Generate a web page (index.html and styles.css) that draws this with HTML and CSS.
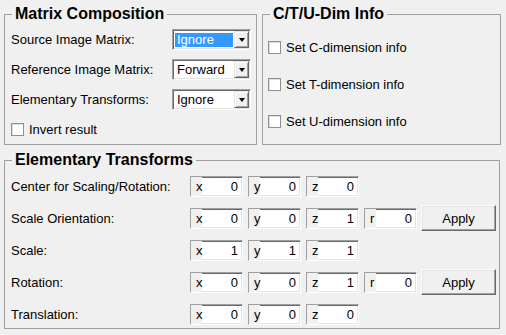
FILE: index.html
```html
<!DOCTYPE html>
<html>
<head>
<meta charset="utf-8">
<link rel="stylesheet" href="styles.css">
</head>
<body>
<div class="top">
  <fieldset class="group g1">
    <legend>Matrix Composition</legend>
    <div class="mc-grid">
      <span class="lbl">Source Image Matrix:</span>
      <div class="combo"><span class="cval sel">Ignore</span><span class="cbtn"><i></i></span></div>
      <span class="lbl">Reference Image Matrix:</span>
      <div class="combo"><span class="cval">Forward</span><span class="cbtn"><i></i></span></div>
      <span class="lbl">Elementary Transforms:</span>
      <div class="combo"><span class="cval">Ignore</span><span class="cbtn"><i></i></span></div>
      <label class="check span2"><span class="box"></span>Invert result</label>
    </div>
  </fieldset>
  <fieldset class="group g2">
    <legend>C/T/U-Dim Info</legend>
    <div class="dim-list">
      <label class="check"><span class="box"></span>Set C-dimension info</label>
      <label class="check"><span class="box"></span>Set T-dimension info</label>
      <label class="check"><span class="box"></span>Set U-dimension info</label>
    </div>
  </fieldset>
</div>
<fieldset class="group g3">
  <legend>Elementary Transforms</legend>
  <div class="et-grid">
    <span class="lbl">Center for Scaling/Rotation:</span>
    <div class="fields">
      <div class="field"><span class="fl">x</span><span class="fv">0</span></div>
      <div class="field"><span class="fl">y</span><span class="fv">0</span></div>
      <div class="field"><span class="fl">z</span><span class="fv">0</span></div>
    </div>
    <span class="lbl">Scale Orientation:</span>
    <div class="fields">
      <div class="field"><span class="fl">x</span><span class="fv">0</span></div>
      <div class="field"><span class="fl">y</span><span class="fv">0</span></div>
      <div class="field"><span class="fl">z</span><span class="fv">1</span></div>
      <div class="field"><span class="fl">r</span><span class="fv">0</span></div>
      <button class="btn">Apply</button>
    </div>
    <span class="lbl">Scale:</span>
    <div class="fields">
      <div class="field"><span class="fl">x</span><span class="fv">1</span></div>
      <div class="field"><span class="fl">y</span><span class="fv">1</span></div>
      <div class="field"><span class="fl">z</span><span class="fv">1</span></div>
    </div>
    <span class="lbl">Rotation:</span>
    <div class="fields">
      <div class="field"><span class="fl">x</span><span class="fv">0</span></div>
      <div class="field"><span class="fl">y</span><span class="fv">0</span></div>
      <div class="field"><span class="fl">z</span><span class="fv">1</span></div>
      <div class="field"><span class="fl">r</span><span class="fv">0</span></div>
      <button class="btn">Apply</button>
    </div>
    <span class="lbl">Translation:</span>
    <div class="fields">
      <div class="field"><span class="fl">x</span><span class="fv">0</span></div>
      <div class="field"><span class="fl">y</span><span class="fv">0</span></div>
      <div class="field"><span class="fl">z</span><span class="fv">0</span></div>
    </div>
  </div>
</fieldset>
</body>
</html>
```
FILE: styles.css
```css
html, body {
  margin: 0;
  padding: 0;
  background: #f0f0f0;
}
body {
  width: 506px;
  height: 335px;
  overflow: hidden;
  font-family: "Liberation Sans", Arial, sans-serif;
  font-size: 13px;
  color: #000;
}
.top {
  display: flex;
  align-items: stretch;
  margin: 5px 0 0 4px;
  gap: 5px;
}
.group {
  margin: 0;
  padding: 0;
  border: 1px solid #a0a0a0;
  min-width: 0;
  box-sizing: border-box;
}
.group legend {
  font-weight: bold;
  font-size: 16px;
  line-height: 18px;
  padding: 0 3px;
  margin-left: 7px;
}
.g1 { width: 253px; }
.g2 { width: 239px; }
.g3 {
  width: 496px;
  margin: 6px 0 0 4px;
}
.mc-grid {
  display: grid;
  grid-template-columns: 161px 79px;
  grid-auto-rows: 21px;
  row-gap: 9px;
  padding: 6px 0 4px 6px;
  align-items: center;
}
.span2 { grid-column: 1 / span 2; }
.lbl { white-space: nowrap; }
.combo {
  height: 21px;
  box-sizing: border-box;
  border: 1px solid;
  border-color: #a0a0a0 #fff #fff #a0a0a0;
  box-shadow: inset 1px 1px 0 #696969, inset -1px -1px 0 #e3e3e3;
  background: #fff;
  display: flex;
  align-items: center;
  padding: 1px 1px 1px 2px;
}
.cval {
  flex: 1;
  height: 14px;
  line-height: 14px;
  padding-left: 2px;
  margin-right: 1px;
}
.cval.sel {
  background: #3399ff;
  color: #fff;
}
.cbtn {
  width: 15px;
  height: 17px;
  box-sizing: border-box;
  background: #f0f0f0;
  border: 1px solid;
  border-color: #e3e3e3 #696969 #696969 #e3e3e3;
  box-shadow: inset 1px 1px 0 #fff, inset -1px -1px 0 #a0a0a0;
  display: flex;
  align-items: center;
  justify-content: center;
}
.cbtn i {
  width: 0;
  height: 0;
  border-left: 3.5px solid transparent;
  border-right: 3.5px solid transparent;
  border-top: 4px solid #000;
  margin-top: 1px;
}
.check {
  display: flex;
  align-items: center;
  gap: 5px;
  white-space: nowrap;
}
.box {
  width: 13px;
  height: 13px;
  box-sizing: border-box;
  border: 1px solid #8e8f8f;
  background: #fff;
  box-shadow: inset 1px 1px 0 #e0e0e0;
  flex: none;
}
.dim-list {
  display: grid;
  grid-auto-rows: 20px;
  row-gap: 17px;
  padding: 14px 0 0 5px;
  align-items: center;
}
.et-grid {
  display: grid;
  grid-template-columns: 179px 1fr;
  grid-auto-rows: 21px;
  row-gap: 11px;
  padding: 7px 0 3px 6px;
  align-items: center;
}
.fields {
  display: flex;
  gap: 5px;
  height: 21px;
  align-items: flex-start;
}
.field {
  width: 53px;
  height: 21px;
  box-sizing: border-box;
  border: 1px solid;
  border-color: #a0a0a0 #fff #fff #a0a0a0;
  box-shadow: inset 1px 1px 0 #696969, inset -1px -1px 0 #e3e3e3;
  background: #fff;
  display: flex;
  line-height: 19px;
  overflow: hidden;
}
.fl {
  width: 11px;
  padding-left: 5px;
  box-sizing: border-box;
  background: #f0f0f0;
  flex: none;
}
.fv {
  flex: 1;
  text-align: right;
  padding-right: 4px;
}
.btn {
  width: 75px;
  height: 26px;
  margin: -3px 0 0 -1px;
  padding: 0;
  box-sizing: border-box;
  font-family: "Liberation Sans", Arial, sans-serif;
  font-size: 13px;
  color: #000;
  background: #f0f0f0;
  border: 1px solid;
  border-color: #fff #696969 #696969 #fff;
  box-shadow: inset -1px -1px 0 #a0a0a0, inset 1px 1px 0 #e3e3e3;
}
```
